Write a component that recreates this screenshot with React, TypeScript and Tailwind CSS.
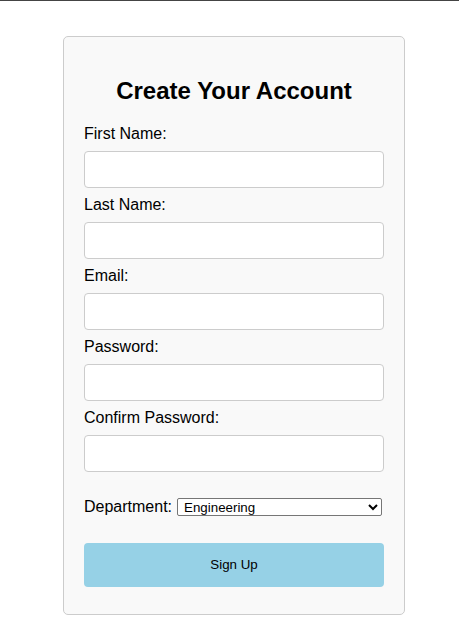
import { useState } from "react";

const fields = [
  { id: "firstName", label: "First Name:", type: "text" },
  { id: "lastName", label: "Last Name:", type: "text" },
  { id: "email", label: "Email:", type: "email" },
  { id: "password", label: "Password:", type: "password" },
  { id: "confirmPassword", label: "Confirm Password:", type: "password" },
];

export default function App() {
  const [department, setDepartment] = useState("Engineering");

  return (
    <div className="min-h-[634px] bg-white font-['Liberation_Sans',Arial,sans-serif] text-black">
      <div className="h-px bg-[#444]" />
      <div className="ml-[63px] mt-[35px] w-[342px] rounded-[5px] border border-[#ccc] bg-[#f9f9f9] px-[20px] pt-[20px] pb-[27px]">
        <h2 className="my-[20px] text-center text-[24px] font-bold leading-[28px]">
          Create Your Account
        </h2>
        <form onSubmit={(e) => e.preventDefault()}>
          {fields.map((f) => (
            <div key={f.id}>
              <label htmlFor={f.id} className="block text-[16px] leading-[18px] mb-[8px]">
                {f.label}
              </label>
              <input
                id={f.id}
                type={f.type}
                className="mb-[8px] block h-[37px] w-full rounded-[4px] border border-[#ccc] bg-white px-[8px] text-[16px] outline-none"
              />
            </div>
          ))}
          <div className="mt-[26px] flex items-center text-[16px] leading-[18px]">
            <label htmlFor="department">Department:</label>
            <select
              id="department"
              value={department}
              onChange={(e) => setDepartment(e.target.value)}
              className="ml-[5px] h-[18px] w-[205px] rounded-[2px] border border-[#767676] bg-white pl-[2px] text-[13.33px] leading-[16px]"
            >
              <option>Engineering</option>
              <option>Marketing</option>
              <option>Sales</option>
              <option>Human Resources</option>
            </select>
          </div>
          <button
            type="submit"
            className="mt-[27px] block h-[44px] w-full rounded-[4px] bg-[#96d1e6] text-[13.33px] text-black"
          >
            Sign Up
          </button>
        </form>
      </div>
    </div>
  );
}
